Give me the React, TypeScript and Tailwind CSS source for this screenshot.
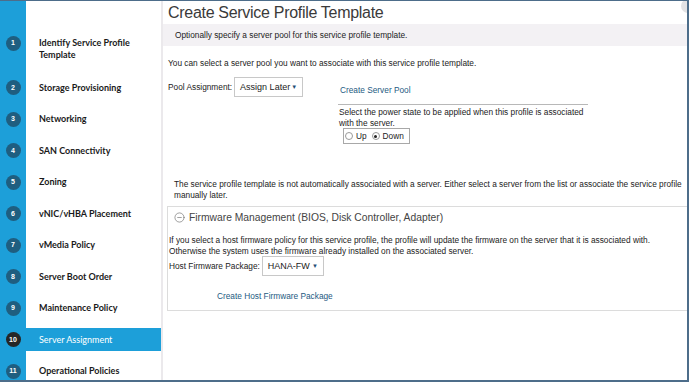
import { MinusCircle } from "lucide-react"

const steps = [
  { n: 1, label: "Identify Service Profile Template" },
  { n: 2, label: "Storage Provisioning" },
  { n: 3, label: "Networking" },
  { n: 4, label: "SAN Connectivity" },
  { n: 5, label: "Zoning" },
  { n: 6, label: "vNIC/vHBA Placement" },
  { n: 7, label: "vMedia Policy" },
  { n: 8, label: "Server Boot Order" },
  { n: 9, label: "Maintenance Policy" },
  { n: 10, label: "Server Assignment", active: true },
  { n: 11, label: "Operational Policies" },
]

function Select({ value, width }: { value: string; width: string }) {
  return (
    <div
      className={`${width} h-[20px] shrink-0 border border-[#c8c8c8] bg-white flex items-center justify-between px-[5px] text-[9px] text-[#222]`}
    >
      <span>{value}</span>
      <span className="text-[6px] text-[#1f4f75]">▼</span>
    </div>
  )
}

export default function App() {
  return (
    <div className="w-[689px] h-[382px] flex overflow-hidden bg-white border-t border-r-2 border-b-2 border-[#4d6d8a] font-['Liberation_Sans',Arial,sans-serif] text-[#222]">
      {/* wizard steps */}
      <div className="w-[163px] shrink-0 flex flex-col overflow-hidden pt-[26px] bg-[linear-gradient(to_right,#1d9fd9_26px,white_26px)] border-r-2 border-[#ebe9ec]">
        {steps.map((s) => (
          <div
            key={s.n}
            className={`shrink-0 flex ${s.n === 1 ? "h-[45px] items-start" : "h-[31.5px] items-center"}`}
          >
            <div
              className={`w-full flex items-center ${s.active ? "bg-[#1d9fd9] h-[23px]" : ""} ${
                s.n === 1 ? "items-start" : ""
              }`}
            >
              <div className={`w-[26px] shrink-0 flex justify-center ${s.n === 1 ? "pt-[9px]" : ""}`}>
                <div
                  className={`w-[15px] h-[15px] rounded-full flex items-center justify-center text-[7px] font-bold text-white ${
                    s.active ? "bg-[#262626]" : "bg-[#1f5e80]"
                  }`}
                >
                  {s.n}
                </div>
              </div>
              <div
                className={`pl-[13px] pr-[12px] text-[9px] leading-[12px] font-['Lato',sans-serif] ${
                  s.active ? "text-white font-normal" : "font-bold text-[#1a1a1a]"
                } ${s.n === 1 ? "pt-[10px]" : ""}`}
              >
                {s.label}
              </div>
            </div>
          </div>
        ))}
      </div>

      {/* main panel */}
      <div className="flex-1 relative flex flex-col text-[8.3px] leading-[11px] whitespace-nowrap">
        <div className="h-[22px] pl-[5px] pt-[1px] flex items-center text-[16px] tracking-[-0.3px] text-[#3a3a3a] font-light">
          Create Service Profile Template
        </div>
        <div className="absolute right-[-8px] top-[-2px] w-[14px] h-[14px] rounded-full bg-[#e2e2e4]" />

        <div className="h-[22px] mt-[1px] bg-[#f3f1f4] flex items-center pl-[12px]">
          Optionally specify a server pool for this service profile template.
        </div>

        <div className="pl-[5px] mt-[12px]">
          You can select a server pool you want to associate with this service profile template.
        </div>

        <div className="flex mt-[8px] pl-[5px]">
          <div className="flex items-center gap-[2px] h-[20px] w-[170px]">
            <span>Pool Assignment:</span>
            <Select value="Assign Later" width="w-[69px]" />
          </div>
          <div className="flex flex-col w-[250px]">
            <div className="text-[#245a82] mt-[8px] pl-[2px]">Create Server Pool</div>
            <div className="h-px bg-[#b8b8b8] mt-[8px]" />
            <div className="mt-[2px] pl-[1px]">
              Select the power state to be applied when this profile is associated
              <br />
              with the server.
            </div>
            <div className="ml-[5px] mt-[-1px] w-[67px] h-[16px] border border-[#a8a8a8] flex items-center gap-[3px] px-[1px]">
              <span className="w-[8px] h-[8px] rounded-full border border-[#9a9a9a] bg-white" />
              <span>Up</span>
              <span className="w-[8px] h-[8px] rounded-full border border-[#9a9a9a] bg-white flex items-center justify-center ml-[2px]">
                <span className="w-[3px] h-[3px] rounded-full bg-[#222]" />
              </span>
              <span>Down</span>
            </div>
          </div>
        </div>

        <div className="pl-[11px] mt-[35px]">
          The service profile template is not automatically associated with a server. Either select a server from the list or associate the service profile
          <br />
          manually later.
        </div>

        <div className="ml-[4px] mt-[5px] h-[105px] border border-r-0 border-[#dcdcdc] flex flex-col">
          <div className="h-[21px] flex items-center gap-[4px] pl-[6px] text-[10.3px] text-[#444]">
            <MinusCircle size={11} strokeWidth={1.2} className="text-[#555]" />
            <span>Firmware Management (BIOS, Disk Controller, Adapter)</span>
          </div>
          <div className="mt-[7px] pl-[1px]">
            If you select a host firmware policy for this service profile, the profile will update the firmware on the server that it is associated with.
            <br />
            Otherwise the system uses the firmware already installed on the associated server.
          </div>
          <div className="flex items-center gap-[2px] pl-[1px] mt-[-1px]">
            <span>Host Firmware Package:</span>
            <Select value="HANA-FW" width="w-[62px]" />
          </div>
          <div className="text-[#245a82] pl-[49px] mt-[15px]">Create Host Firmware Package</div>
        </div>
      </div>
    </div>
  )
}
